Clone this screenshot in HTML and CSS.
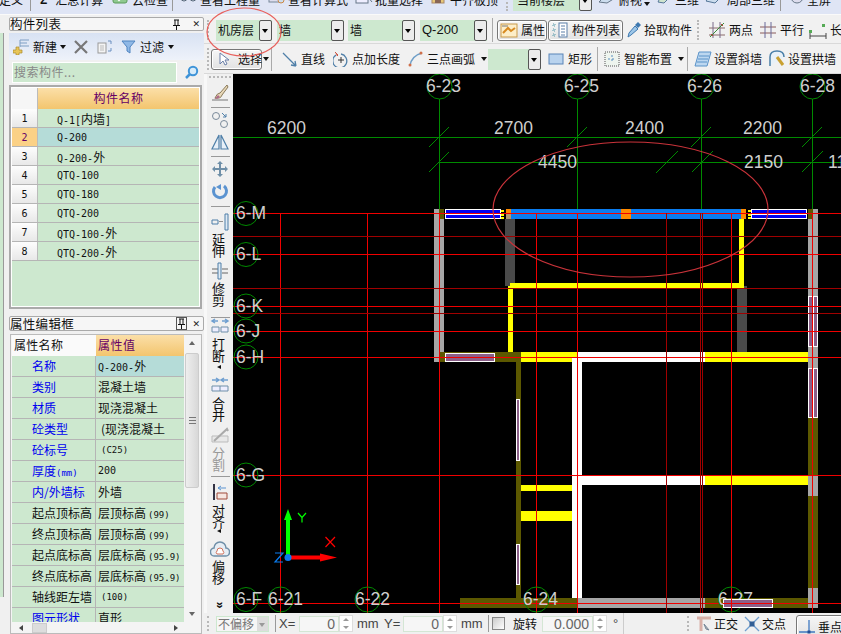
FILE: index.html
```html
<!DOCTYPE html>
<html lang="zh-CN">
<head>
<meta charset="utf-8">
<title>构件绘制</title>
<link rel="stylesheet" href="styles.css">
</head>
<body>
<div class="app">
  <header class="topbar">
    <span class="top-item ti-def">定义</span><i class="vsep"></i>
    <span class="top-item ti-sum"><b class="sigma">Σ</b>汇总计算</span>
    <span class="top-item ti-cloud"><svg width="16" height="14" viewBox="0 0 16 14"><rect x="1" y="0" width="14" height="9" rx="2" fill="#8fc98f" stroke="#5a9a5a"/><path d="M4 3l3 3 5-5" stroke="#fff" fill="none" stroke-width="2"/></svg>云检查</span><i class="vsep"></i>
    <span class="top-item ti-qty"><svg width="18" height="14" viewBox="0 0 18 14"><circle cx="4" cy="4" r="3" fill="none" stroke="#567"/><circle cx="13" cy="4" r="3" fill="none" stroke="#567"/><path d="M7 4h3" stroke="#567"/></svg>查看工程量</span>
    <span class="top-item ti-calc"><svg width="18" height="14" viewBox="0 0 18 14"><rect x="1" y="0" width="12" height="8" fill="#dde" stroke="#789"/><circle cx="13" cy="6" r="3" fill="#cde" stroke="#c84"/></svg>查看计算式</span>
    <span class="top-item ti-batch"><svg width="18" height="14" viewBox="0 0 18 14"><rect x="1" y="0" width="12" height="9" fill="#eef" stroke="#678"/><path d="M13 3l4 5" stroke="#678"/></svg>批量选择</span>
    <span class="top-item ti-flush"><svg width="16" height="14" viewBox="0 0 16 14"><rect x="2" y="0" width="12" height="9" fill="#e8c878" stroke="#a86"/><rect x="5" y="3" width="6" height="6" fill="#865"/></svg>平齐板顶</span>
    <i class="grip grip-top"></i>
    <span class="top-combo"><span class="top-combo-text">当前楼层</span><i class="arrow-btn"></i></span>
    <span class="top-item ti-view"><svg width="18" height="14" viewBox="0 0 18 14"><path d="M1 8l8-8 8 4-8 5z" fill="#cde" stroke="#678"/></svg>俯视<i class="caret"></i></span>
    <span class="top-item ti-3d"><svg width="18" height="14" viewBox="0 0 18 14"><path d="M3 8l4-8 8 3-6 6z" fill="#cfe4cf" stroke="#579"/></svg>三维</span>
    <span class="top-item ti-local"><svg width="18" height="14" viewBox="0 0 18 14"><path d="M1 7l6-7 9 3-6 6z" fill="#cde" stroke="#579"/></svg>局部三维</span><i class="vsep"></i>
    <span class="top-item ti-full"><svg width="18" height="14" viewBox="0 0 18 14"><circle cx="9" cy="3" r="6" fill="#dde" stroke="#678"/></svg>全屏</span>
  </header>

  <div class="main">
    <div class="edge-rail"><div class="edge-green"></div></div>

    <aside class="side">
      <div class="pane-title">
        <span class="pane-name">构件列表</span>
        <span class="pane-btns"><svg class="pin" width="9" height="11" viewBox="0 0 9 11"><path d="M2 1h5M3 1v5M6 1v5M1 6.500h7M4.500 7v4" stroke="#111" fill="none"/></svg><span class="close">✕</span></span>
      </div>
      <div class="list-bar">
        <span class="lb-new">
          <svg width="17" height="17" viewBox="0 0 17 17"><path d="M7 2h9M7 5h7M7 8h9" stroke="#7f9fc4" fill="none"/><path d="M7 2v7" stroke="#7f9fc4"/><path d="M3 9h3v3h3v3H6v2H3v-2H0v-3h3z" fill="#e8c65a" stroke="#a98a30" stroke-width=".7"/></svg>
          新建<i class="caret"></i>
        </span>
        <svg class="lb-del" width="14" height="14" viewBox="0 0 14 14"><path d="M1 1l12 12M13 1L1 13" stroke="#777" stroke-width="2.200"/></svg>
        <svg class="lb-copy" width="16" height="14" viewBox="0 0 16 14"><rect x="1" y="3" width="8" height="10" fill="#f4f4f4" stroke="#999"/><path d="M3 6h4M3 8h4M3 10h4" stroke="#bbb"/><path d="M11 1h3v3M14 8v3h-3" stroke="#6a8fc0" fill="none"/></svg>
        <span class="lb-filter">
          <svg width="15" height="14" viewBox="0 0 15 14"><path d="M1 1h13L9 7v6L6 11V7z" fill="#8fb8e6" stroke="#4f84c0"/></svg>
          过滤<i class="caret"></i>
        </span>
      </div>
      <div class="search-row">
        <span class="search-box">搜索构件...</span>
        <svg class="search-ico" width="15" height="15" viewBox="0 0 15 15"><circle cx="9" cy="6" r="4.200" fill="#d8ecfa" stroke="#3f94d8" stroke-width="2"/><path d="M6 9l-4 4" stroke="#3f94d8" stroke-width="2.500"/></svg>
      </div>
      <div class="list-grid">
        <div class="lg-row lg-head"><span class="lg-idx lg-corner"></span><span class="lg-name">构件名称</span></div>
        <div class="lg-row"><span class="lg-idx">1</span><span class="lg-val">Q-1[<span class="cjk">内墙</span>]</span></div>
        <div class="lg-row lg-sel"><span class="lg-idx">2</span><span class="lg-val">Q-200</span></div>
        <div class="lg-row"><span class="lg-idx">3</span><span class="lg-val">Q-200-<span class="cjk">外</span></span></div>
        <div class="lg-row"><span class="lg-idx">4</span><span class="lg-val">QTQ-100</span></div>
        <div class="lg-row"><span class="lg-idx">5</span><span class="lg-val">QTQ-180</span></div>
        <div class="lg-row"><span class="lg-idx">6</span><span class="lg-val">QTQ-200</span></div>
        <div class="lg-row"><span class="lg-idx">7</span><span class="lg-val">QTQ-100-<span class="cjk">外</span></span></div>
        <div class="lg-row"><span class="lg-idx">8</span><span class="lg-val">QTQ-200-<span class="cjk">外</span></span></div>
      </div>

      <div class="pane-title pane-title-2">
        <span class="pane-name">属性编辑框</span>
        <span class="pane-btns pane-btns-box"><svg class="pin" width="9" height="11" viewBox="0 0 9 11"><path d="M2 1h5M3 1v5M6 1v5M1 6.500h7M4.500 7v4" stroke="#111" fill="none"/></svg><span class="close">✕</span></span>
      </div>
      <div class="prop-grid">
        <div class="prop-table">
          <div class="pr pr-head"><span class="pk">属性名称</span><span class="pv">属性值</span></div>
          <div class="pr"><span class="pk blue">名称</span><span class="pv pv-sel mono">Q-200-<span class="cjk">外</span></span></div>
          <div class="pr"><span class="pk blue">类别</span><span class="pv">混凝土墙</span></div>
          <div class="pr"><span class="pk blue">材质</span><span class="pv">现浇混凝土</span></div>
          <div class="pr"><span class="pk blue">砼类型</span><span class="pv pv-in">(现浇混凝土</span></div>
          <div class="pr"><span class="pk blue">砼标号</span><span class="pv pv-in par">(C25)</span></div>
          <div class="pr"><span class="pk blue">厚度<span class="unit">(mm)</span></span><span class="pv mono">200</span></div>
          <div class="pr"><span class="pk blue">内/外墙标</span><span class="pv">外墙</span></div>
          <div class="pr"><span class="pk">起点顶标高</span><span class="pv">层顶标高<span class="par par-gap">(99)</span></span></div>
          <div class="pr"><span class="pk">终点顶标高</span><span class="pv">层顶标高<span class="par par-gap">(99)</span></span></div>
          <div class="pr"><span class="pk">起点底标高</span><span class="pv">层底标高<span class="par par-gap">(95.9)</span></span></div>
          <div class="pr"><span class="pk">终点底标高</span><span class="pv">层底标高<span class="par par-gap">(95.9)</span></span></div>
          <div class="pr"><span class="pk">轴线距左墙</span><span class="pv pv-in par">(100)</span></div>
          <div class="pr"><span class="pk blue">图元形状</span><span class="pv">直形</span></div>
        </div>
        <div class="vscroll"><i class="sb-up"></i><i class="sb-thumb"><i class="sb-lines"></i></i><i class="sb-down"></i></div>
        <div class="hscroll"><i class="hs-left"></i><i class="hs-thumb"></i><i class="hs-right"></i></div>
      </div>
    </aside>

    <section class="work">
      <div class="toolbar tb-one">
        <i class="grip"></i>
        <span class="combo c-floor"><span class="combo-text">机房层</span><i class="arrow-btn"></i></span>
        <span class="combo c-a"><span class="combo-text">墙</span><i class="arrow-btn"></i></span>
        <span class="combo c-b"><span class="combo-text">墙</span><i class="arrow-btn"></i></span>
        <span class="combo c-c"><span class="combo-text combo-latin">Q-200</span><i class="arrow-btn"></i></span>
        <i class="vsep tall s-one"></i>
        <span class="tool toggled t-attr"><svg width="18" height="16" viewBox="0 0 18 16"><rect x="1" y="2" width="16" height="13" fill="#fdeec8" stroke="#c99a4a"/><path d="M3 11l5-5 3 3 4-3" stroke="#d88a20" stroke-width="2" fill="none"/><path d="M2 4h6" stroke="#777"/></svg>属性</span>
        <span class="tool toggled t-list"><svg width="18" height="16" viewBox="0 0 18 16"><path d="M2 2h2v2H2zM2 7h2v2H2zM2 12h2v2H2z" fill="none" stroke="#59a" stroke-dasharray="1 1"/><rect x="8" y="1" width="8" height="14" fill="#fff" stroke="#5a7fa8"/><path d="M10 4h4M10 7h4M10 10h4M10 13h4" stroke="#5a7fa8"/></svg>构件列表</span>
        <span class="tool t-pick"><svg width="16" height="18" viewBox="0 0 16 18"><path d="M2 16l1-4 6-7 3 3-7 6z" fill="#9cc6e8" stroke="#3f79b0"/><path d="M9 4l3-3 3 3-3 3z" fill="#3f79b0"/></svg>拾取构件</span>
        <i class="grip grip-mid"></i>
        <span class="tool t-two"><svg width="18" height="18" viewBox="0 0 18 18"><path d="M1 14h16M1 7h16" stroke="#8a6a6a"/><path d="M5 1v16M12 1v16" stroke="#7a6a8a"/><path d="M2 16L16 2" stroke="#3a8a3a"/><path d="M3 13l2 2M13 3l2 2" stroke="#c33"/></svg>两点</span>
        <span class="tool t-par"><svg width="18" height="18" viewBox="0 0 18 18"><path d="M1 6h16M1 12h16" stroke="#8a5a5a"/><path d="M6 1v16M12 1v16" stroke="#6a6a9a"/></svg>平行</span>
        <span class="tool t-long"><svg width="18" height="18" viewBox="0 0 18 18"><path d="M1 15h16M1 12v6M17 12v6" stroke="#444"/><rect x="0" y="9" width="3" height="3" fill="#5a5"/><rect x="13" y="3" width="3" height="3" fill="#5a5"/></svg>长度</span>
      </div>

      <div class="toolbar tb-two">
        <i class="grip"></i>
        <span class="tool toggled t-select"><svg width="12" height="14" viewBox="0 0 12 14"><path d="M2 1v11l3-3 2 4 2-1-2-4h4z" fill="#fff" stroke="#6a7fa8"/></svg><span>选择</span></span><i class="caret caret-sel"></i>
        <i class="vsep tall s-two"></i>
        <span class="tool"><svg width="16" height="16" viewBox="0 0 16 16"><path d="M1 2l13 13M14 15l-1-5M14 15l-5-1" stroke="#4f7fa8" fill="none" stroke-width="1.300"/></svg>直线</span>
        <span class="tool"><svg width="16" height="16" viewBox="0 0 16 16"><path d="M3 4a7 7 0 1 0 5-1" stroke="#4f7fa8" fill="none" stroke-width="1.300"/><path d="M8 6v6M5 9h6" stroke="#333"/><path d="M2 1l3 3-1 1" fill="#c54" stroke="#c54"/></svg>点加长度</span>
        <span class="tool"><svg width="16" height="16" viewBox="0 0 16 16"><path d="M2 15Q3 5 14 2" stroke="#6f9fc8" fill="none" stroke-width="1.500"/><circle cx="2" cy="14" r="1.500" fill="#d0704a"/><circle cx="13" cy="2" r="1.500" fill="#d0704a"/></svg>三点画弧<i class="caret caret-gap"></i></span>
        <span class="combo c-blank"><span class="combo-text"></span><i class="arrow-btn"></i></span>
        <span class="tool t-rect"><svg width="16" height="14" viewBox="0 0 16 14"><rect x="1" y="2" width="14" height="10" fill="#b9d3ee" stroke="#5b85b8"/></svg>矩形</span>
        <i class="vsep tall s-rect"></i>
        <span class="tool t-smart"><svg width="16" height="16" viewBox="0 0 16 16"><rect x="1" y="1" width="14" height="14" fill="#eef4ee" stroke="#555" stroke-dasharray="1 1"/><path d="M8 4v8M4 8h8" stroke="#5a8fc0" stroke-dasharray="2 2"/></svg>智能布置<i class="caret"></i></span>
        <i class="vsep tall s-smart"></i>
        <span class="tool t-slant"><svg width="18" height="16" viewBox="0 0 18 16"><path d="M5 1h12l-4 14H1z" fill="#bcd7f0" stroke="#5b93c8"/><path d="M5 5h10M4 8h10M3 11h10" stroke="#5b93c8"/></svg>设置斜墙</span>
        <span class="tool t-arch"><svg width="18" height="18" viewBox="0 0 18 18"><path d="M2 16V7Q2 1 9 1t7 6" fill="#e8f1f8" stroke="#4a7fa8" stroke-width="1.500"/><path d="M9 7l6 8" stroke="#c9a030" stroke-width="3"/></svg>设置拱墙</span>
      </div>

      <div class="mid">
        <nav class="tools">
          <i class="grip-h"></i>
          <svg class="ti mt4" width="20" height="18" viewBox="0 0 20 18"><path d="M2 16h16" stroke="#777"/><path d="M5 14q2-5 5-5l7-8 1 2-6 8q-1 4-7 3z" fill="#e8d8b8" stroke="#8a7a5a"/><path d="M4 15q2-1 4-4l2 2q-2 2-6 2z" fill="#b06a8a"/></svg>
          <i class="tsep mt5"></i>
          <svg class="ti mt3" width="20" height="18" viewBox="0 0 20 18"><circle cx="6" cy="5" r="3.500" fill="none" stroke="#7a8a9a"/><circle cx="14" cy="13" r="3.500" fill="none" stroke="#7a8a9a"/><path d="M12 2l4 4M16 3v3h-3" stroke="#4f7fa8" fill="none"/></svg>
          <svg class="ti mt4" width="20" height="18" viewBox="0 0 20 18"><path d="M9 2v14H2zM11 2v14h7z" fill="#e8f0f8" stroke="#4f7fa8" stroke-width="1.200"/></svg>
          <i class="tsep mt5"></i>
          <svg class="ti mt3" width="20" height="18" viewBox="0 0 20 18"><path d="M10 1l3 3h-2v4h4V6l3 3-3 3v-2h-4v4h2l-3 3-3-3h2v-4H5v2L2 9l3-3v2h4V4H7z" fill="#6f8fa8"/></svg>
          <svg class="ti mt5" width="20" height="18" viewBox="0 0 20 18"><path d="M5 4a6.500 6.500 0 1 0 9-1" stroke="#5b93d0" fill="none" stroke-width="3"/><path d="M11 1v6l-5-3z" fill="#5b93d0"/></svg>
          <i class="tsep mt5"></i>
          <svg class="ti mt6" width="20" height="18" viewBox="0 0 20 18"><path d="M2 7h6v4H2z" fill="none" stroke="#4f7fa8"/><path d="M10 8v1M12 8v1" stroke="#333"/><path d="M15 1h3v16h-3z" fill="#dfeaf4" stroke="#4f7fa8"/></svg>
          <span class="tv mt2">延<br>伸</span>
          <svg class="ti mt5" width="20" height="18" viewBox="0 0 20 18"><path d="M2 7h6M2 11h6M12 7h6M12 11h6" stroke="#666"/><path d="M8 1h3v16H8z" fill="#dfeaf4" stroke="#4f7fa8"/></svg>
          <span class="tv mt2">修<br>剪</span>
          <i class="tsep mt11"></i>
          <svg class="ti" width="20" height="18" viewBox="0 0 20 18"><path d="M2 3h6M12 3h6M5 1L2 3l3 2M15 1l3 2-3 2" stroke="#6f9fd0" fill="none" stroke-width="1.500"/><path d="M2 9h7v5H2zM11 9h7v5h-7z" fill="#eef" stroke="#6f8fa8"/></svg>
          <span class="tv mt2">打<br>断</span>
          <i class="tri-left mt3"></i>
          <svg class="ti mt8" width="20" height="18" viewBox="0 0 20 18"><path d="M2 3h6M12 3h6M6 1l3 2-3 2M14 1l-3 2 3 2" stroke="#6f9fd0" fill="none" stroke-width="1.500"/><path d="M2 9h16v5H2zM10 9v5" fill="#eef" stroke="#6f8fa8"/></svg>
          <span class="tv mt2">合<br>并</span>
          <svg class="ti mt6" width="20" height="18" viewBox="0 0 20 18"><path d="M2 9h16v6H2z" fill="#e8e8e8" stroke="#bbb"/><path d="M4 14L17 2l1 2" stroke="#aaa" fill="none" stroke-width="2"/></svg>
          <span class="tv tv-off mt2">分<br>割</span>
          <i class="tsep mt5"></i>
          <svg class="ti mt6" width="20" height="18" viewBox="0 0 20 18"><path d="M3 1h2v16H3z" fill="#334"/><path d="M16 5H8M11 3L8 5l3 2" stroke="#5b93d0" fill="none"/><path d="M7 10h10v6H7z" fill="#f6e6e0" stroke="#a04a3a"/></svg>
          <span class="tv mt3">对<br>齐</span>
          <i class="tri-left mt1"></i>
          <svg class="ti mt8" width="20" height="18" viewBox="0 0 20 18"><path d="M5 15a4 4 0 0 1-1-8 6 6 0 0 1 12 0 4 4 0 0 1-1 8z" fill="#e6edf4" stroke="#6f8fa8" stroke-width="1.500"/><path d="M7 13a2 2 0 0 1 0-3 3 3 0 0 1 6 0 2 2 0 0 1 0 3z" fill="#fff" stroke="#d0705a"/></svg>
          <span class="tv mt1">偏<br>移</span>
          <span class="more">»</span>
        </nav>

        <div class="canvas">
          <svg class="drawing" width="608" height="539" viewBox="233 74 608 539" xmlns="http://www.w3.org/2000/svg">
            <!-- dimension and axis lines -->
            <path class="gline" d="M233 137.500H841M439 162.500H841M439.500 99V209M577.500 99V213M701.500 99V213M812.500 99V209"/>
            <path class="gtick" d="M429 147l20-20M567 147l20-20M691 147l20-20M802 147l20-20M429 172l20-20M656 173l22-22M692 172l21-21M802 172l21-21"/>

            <!-- walls -->
            <rect class="w-gray" x="434" y="209" width="10" height="153"/>
            <rect class="w-olive" x="439" y="209" width="5" height="10"/>
            <rect class="w-gray" x="808" y="209" width="10" height="399"/>
            <rect class="w-olive" x="808" y="209" width="5" height="10"/>
            <rect class="w-olive" x="808" y="418" width="10" height="58"/>
            <rect class="w-olive" x="808" y="496" width="10" height="92"/>
            <rect class="w-dark" x="505" y="219" width="10" height="67"/>
            <rect class="w-dark" x="737" y="286" width="10" height="66"/>
            <rect class="w-yellow" x="510" y="283" width="234" height="5"/>
            <rect class="w-yellow" x="739" y="219" width="5" height="69"/>
            <rect class="w-yellow" x="508" y="286" width="5" height="66"/>
            <rect class="w-blue" x="511" y="209" width="230" height="10"/>
            <rect class="w-orange" x="506" y="209" width="5" height="10"/>
            <rect class="w-tan" x="506" y="214" width="5" height="5"/>
            <rect class="w-orange" x="621" y="209" width="10" height="10"/>
            <rect class="w-orange" x="741" y="209" width="5" height="10"/>
            <path class="w-bits" d="M501 210h3v2h-3zM501 214h3v2h-3zM501 217h3v2h-3zM748 210h3v2h-3zM748 214h3v2h-3zM748 217h3v2h-3z"/>
            <rect class="w-olive" x="439" y="352" width="82" height="10"/>
            <rect class="w-olive" x="516" y="362" width="5" height="236"/>
            <rect class="w-yellow" x="521" y="352" width="56" height="5"/>
            <rect class="w-yellow" x="521" y="357" width="51" height="5"/>
            <rect class="w-white" x="577" y="352" width="128" height="10"/>
            <rect class="w-white" x="572" y="357" width="10" height="241"/>
            <rect class="w-yellow" x="705" y="352" width="103" height="10"/>
            <rect class="w-white" x="582" y="475" width="123" height="10"/>
            <rect class="w-yellow" x="705" y="475" width="103" height="10"/>
            <rect class="w-yellow" x="521" y="485" width="51" height="6"/>
            <rect class="w-yellow" x="521" y="511" width="51" height="10"/>
            <rect class="w-olive" x="460" y="598" width="117" height="10"/>
            <rect class="w-gray" x="577" y="598" width="123" height="10"/>
            <rect class="w-olive" x="705" y="598" width="103" height="10"/>
            <rect class="w-gray" x="700" y="598" width="5" height="10"/>

            <!-- blue windows on the top wall -->
            <rect class="win-blue" x="445.500" y="209.500" width="55" height="9"/>
            <path class="win-mid" d="M445 214.500h56"/>
            <rect class="win-blue" x="751.500" y="209.500" width="55" height="9"/>
            <path class="win-mid" d="M751 214.500h56"/>

            <!-- pink windows -->
            <rect class="win-pink" x="445.500" y="353.500" width="49" height="8"/>
            <path class="win-mid" d="M445 357.500h50"/>
            <rect class="win-pink" x="808.500" y="296.500" width="9" height="50"/>
            <path class="win-mid" d="M813.500 296v51"/>
            <rect class="win-pink" x="808.500" y="368.500" width="9" height="49"/>
            <path class="win-mid" d="M813.500 368v50"/>
            <rect class="win-pink" x="516.500" y="399.500" width="3" height="61"/>
            <rect class="win-pink" x="516.500" y="544.500" width="3" height="40"/>

            <!-- red construction lines -->
            <path class="rline" d="M233 213.500H841M233 254.500H841M233 306.500H841M233 331.500H841M233 357.500H841M233 475.500H841M233 603.500H841M280.500 213V613M367.500 213V613M439.500 213V613M536.500 213V613M577.500 213V613M731.500 213V613M812.500 213V613"/>
            <path class="rdark" d="M233 236.500H841M233 288.500H841M233 313.500H841M666.500 213V613M700.500 213V613M702.500 213V613"/>

            <!-- axis bubbles -->
            <g class="bubbles">
              <circle cx="439.500" cy="86.500" r="12.500"/><circle cx="577.500" cy="86.500" r="12.500"/><circle cx="701.500" cy="86.500" r="12.500"/><circle cx="812.500" cy="86.500" r="12.500"/>
              <circle cx="246" cy="213.500" r="12"/><circle cx="246" cy="254.500" r="12"/><circle cx="246" cy="306" r="12"/><circle cx="246" cy="331" r="12"/><circle cx="246" cy="357" r="12"/><circle cx="246" cy="475" r="12"/>
              <circle cx="246" cy="599.500" r="12"/><circle cx="280.500" cy="599.500" r="12.500"/><circle cx="367.500" cy="599.500" r="12.500"/><circle cx="536.500" cy="599.500" r="12.500"/><circle cx="731" cy="599.500" r="12.500"/>
            </g>
            <g class="labels">
              <text x="426" y="92">6-23</text><text x="564" y="92">6-25</text><text x="687" y="92">6-26</text><text x="800" y="92">6-28</text>
              <text x="267" y="134">6200</text><text x="494" y="134">2700</text><text x="625" y="134">2400</text><text x="743" y="134">2200</text>
              <text x="538" y="168">4450</text><text x="744" y="168">2150</text><text x="828" y="168">11</text>
              <text x="236" y="219">6-M</text><text x="236" y="260">6-L</text><text x="236" y="312">6-K</text><text x="236" y="337">6-J</text><text x="236" y="363">6-H</text><text x="236" y="481">6-G</text>
              <text x="236" y="605">6-F</text><text x="268" y="605">6-21</text><text x="355" y="605">6-22</text><text x="523" y="605">6-24</text><text x="718" y="605">6-27</text>
            </g>
            <rect class="win-pink" x="723.500" y="599.500" width="49" height="8"/>
            <path class="win-mid" d="M723 603.500h50"/>
            <path class="rline" d="M723 603.500h50M731.500 599V608"/>

            <!-- coordinate marker -->
            <path class="ucs-y" d="M286 520h4v37h-4zM288 509l4 11h-8z"/>
            <path class="ucs-x" d="M288 555.500h34v4h-34zM337 557.500l-17 4v-8z"/>
            <path class="ucs-y-l" d="M298 513l4 4.500 4-4.500M302 517.500v5"/>
            <path class="ucs-x-l" d="M325.500 537l9.500 10M335 537l-9.500 10"/>
            <path class="ucs-z-l" d="M275 553h8l-8 9h8"/>
            <circle class="ucs-o" cx="288" cy="557.500" r="3.500"/>
          </svg>
        </div>
      </div>

      <footer class="status">
        <i class="grip"></i>
        <span class="st-combo"><span>不偏移</span><i class="st-drop"></i></span>
        <i class="vsep st-sep"></i>
        <span class="st-label st-x">X=</span>
        <span class="st-input st-num">0</span><i class="spin"></i>
        <span class="st-label st-mm">mm</span>
        <span class="st-label st-y">Y=</span>
        <span class="st-input st-num">0</span><i class="spin"></i>
        <span class="st-label st-mm">mm</span>
        <i class="vsep st-sep2"></i>
        <i class="check"></i>
        <span class="st-text st-rot">旋转</span>
        <span class="st-input st-angle">0.000</span><i class="spin"></i>
        <span class="st-label st-deg">°</span>
        <i class="vsep st-sep3"></i>
        <i class="grip st-grip"></i>
        <span class="tool st-tool"><svg width="16" height="16" viewBox="0 0 16 16"><path d="M1 2h14M5 2v13" stroke="#d8b0a8" stroke-width="3"/><path d="M8 8l5 6-3-1z" fill="#bbb" stroke="#789"/></svg>正交</span>
        <span class="tool st-tool st-cross"><svg width="16" height="16" viewBox="0 0 16 16"><path d="M1 1l14 14M15 1L1 15" stroke="#6f9fd0" stroke-width="1.300"/><rect x="5.500" y="5.500" width="5" height="5" fill="#335f95"/></svg>交点</span>
        <span class="tool toggled st-perp"><svg width="16" height="16" viewBox="0 0 16 16"><path d="M0 13h16M10 1v12" stroke="#3f79c0" stroke-width="1.300"/><rect x="8.500" y="11.500" width="3" height="3" fill="#234f95"/></svg>垂点</span>
      </footer>
    </section>

    <svg class="annot" width="841" height="634" viewBox="0 0 841 634" xmlns="http://www.w3.org/2000/svg">
      <ellipse class="annot-a" cx="244" cy="32" rx="37" ry="24"/>
      <ellipse class="annot-b" cx="630.500" cy="209.500" rx="137.500" ry="67.500"/>
    </svg>
  </div>
</div>
</body>
</html>
```

FILE: styles.css
```css
* { box-sizing: border-box; }
html, body { margin: 0; padding: 0; }
body {
  width: 841px;
  height: 634px;
  overflow: hidden;
  background: #f0f0f0;
  font-family: "Noto Sans CJK SC", "Liberation Sans", sans-serif;
  font-size: 12px;
  line-height: 12px;
  color: #111;
}
i { display: block; font-style: normal; }
svg { display: block; flex: none; }

.app { display: flex; flex-direction: column; width: 841px; height: 634px; overflow: hidden; position: relative; }

.grip { width: 2px; flex: none; align-self: stretch; border-left: 2px dotted #b8b8b8; margin: 3px 0; }
.caret { width: 0; height: 0; border: 3px solid transparent; border-top: 4px solid #111; border-bottom: 0; flex: none; }
.vsep { width: 1px; background: #999; flex: none; }

/* top bar, clipped by the window edge */
.topbar {
  height: 15px;
  flex: none;
  display: flex;
  align-items: flex-end;
  overflow: hidden;
  background: #dfe5f5;
  border-bottom: 1px solid #fafafa;
  padding-bottom: 8px;
}
.top-item { display: flex; align-items: flex-end; gap: 4px; flex: none; }
.top-item svg { margin-bottom: -2px; }
.sigma { font-weight: 700; font-family: "Liberation Sans", sans-serif; margin-right: 4px; }
.topbar .vsep { height: 24px; margin-bottom: -5px; }
.ti-def { margin-left: -1px; width: 31px; }
.ti-sum { margin-left: 9px; width: 66px; }
.ti-cloud { margin-left: 6px; width: 60px; }
.ti-qty { margin-left: 7px; width: 82px; gap: 2px; }
.ti-calc { margin-left: 6px; width: 82px; gap: 2px; }
.ti-batch { margin-left: 5px; width: 70px; gap: 2px; }
.ti-flush { margin-left: 5px; width: 72px; gap: 4px; }
.topbar .grip-top { height: 24px; margin: 0 5px -5px 4px; align-self: flex-end; }
.top-combo { width: 79px; height: 24px; margin-bottom: -5px; background: #cde8cf; display: flex; justify-content: space-between; align-items: flex-end; flex: none; padding-left: 4px; }
.top-combo-text { padding-bottom: 5px; }
.ti-view { margin-left: 6px; width: 57px; gap: 2px; }
.ti-3d { width: 50px; gap: 2px; }
.ti-local { width: 75px; gap: 4px; }
.ti-full { margin-left: 7px; gap: 1px; }

/* main layout */
.main { flex: 1; display: flex; min-height: 0; position: relative; }
.edge-rail { width: 9px; flex: none; background: #f0f0f0; padding-top: 18px; }
.edge-green { width: 3px; height: 564px; background: #cde8cf; box-shadow: 1px 0 0 #999; }

.side { width: 195px; flex: none; display: flex; flex-direction: column; background: #f0f0f0; }
.pane-title {
  margin-top: 2px;
  height: 14px;
  flex: none;
  display: flex;
  align-items: center;
  justify-content: space-between;
  border: 1px solid #aaa;
  border-radius: 2px;
  background: #f6f6f6;
}
.pane-name { font-size: 12.500px; letter-spacing: .3px; }
.pane-btns { display: flex; align-items: center; gap: 11px; padding-right: 3px; }
.pane-btns-box .pin { outline: 1px solid #555; }
.close { font-size: 9px; color: #222; font-family: "DejaVu Sans", sans-serif; }

.list-bar {
  margin-top: 2px;
  height: 27px;
  flex: none;
  display: flex;
  align-items: center;
  background: linear-gradient(#d8e2f3, #eef2fa);
  padding-left: 4px;
}
.lb-new { display: flex; align-items: center; gap: 3px; width: 61px; }
.lb-del { margin-right: 9px; }
.lb-copy { margin-right: 8px; }
.lb-filter { display: flex; align-items: center; gap: 4px; }

.search-row { height: 25px; flex: none; display: flex; align-items: center; padding-left: 3px; }
.search-box { width: 165px; height: 21px; background: #cde8cf; border: 1px solid #fff; color: #888; line-height: 17px; padding-left: 1px; font-size: 12px; letter-spacing: .5px; }
.search-ico { margin-left: 7px; }

.list-grid {
  height: 224px;
  flex: none;
  margin-right: 2px;
  border: 2px solid #aaa;
  background: #cde8cf;
  box-shadow: inset 0 0 0 1px #fff;
  padding: 1px;
}
.lg-row { display: flex; height: 19px; border-bottom: 1px solid #b5b5b5; }
.lg-head { height: 21px; border-bottom: 0; }
.lg-idx { width: 26px; flex: none; background: linear-gradient(#fdfdfd, #e8e8e8); border-right: 1px solid #bbb; text-align: center; line-height: 19px; font-family: "DejaVu Sans Mono", monospace; font-size: 10px; }
.lg-corner { background: #f6f6f6; }
.lg-name { flex: 1; background: linear-gradient(#fbdfa8, #f3c56e); color: #660066; text-align: center; line-height: 20px; letter-spacing: .5px; }
.lg-val { flex: 1; padding-left: 19px; line-height: 19px; font-family: "DejaVu Sans Mono", "Noto Sans CJK SC", monospace; font-size: 10px; }
.cjk { font-family: "Noto Sans CJK SC", sans-serif; font-size: 12px; }
.lg-sel .lg-idx { background: #fbd186; color: #660066; }
.lg-sel .lg-val { background: #b5dcd8; }

.pane-title-2 { margin-top: 7px; height: 15px; }
.pane-btns-box { gap: 6px; }

.prop-grid {
  flex: 1;
  min-height: 0;
  margin: 3px 2px 0 1px;
  border: 1px solid #bbb;
  background: #f4f4f4;
  padding: 0 0 0 1px;
  display: grid;
  grid-template-columns: 172px 16px;
  grid-template-rows: 1fr 11px;
  overflow: hidden;
}
.prop-table { overflow: hidden; background: #cde8cf; }
.pr { display: flex; height: 21px; border-bottom: 1px solid #b5b5b5; line-height: 20px; }
.pr-head { border-bottom: 0; }
.pk { width: 84px; flex: none; padding-left: 20px; border-right: 1px solid #b5b5b5; white-space: nowrap; overflow: hidden; }
.pv { flex: 1; padding-left: 2px; white-space: nowrap; overflow: hidden; }
.pr-head .pk { background: #fafafa; padding-left: 2px; border-right: 0; letter-spacing: .3px; }
.pr-head .pv { background: linear-gradient(#fbdfa8, #f3c56e); color: #660066; letter-spacing: .5px; }
.blue { color: #0000f0; }
.pv-sel { background: #b5dcd8; }
.pv-in { padding-left: 5px; }
.mono { font-family: "DejaVu Sans Mono", monospace; font-size: 10px; }
.par { font-family: "DejaVu Sans Mono", monospace; font-size: 9px; }
.par-gap { margin-left: 2px; }
.unit { font-family: "DejaVu Sans Mono", monospace; font-size: 9px; }

.vscroll { display: flex; flex-direction: column; align-items: center; background: #f4f4f4; }
.sb-up { width: 0; height: 0; border: 3px solid transparent; border-bottom: 4px solid #666; border-top: 0; margin: 6px 0 8px; flex: none; }
.sb-thumb { width: 14px; height: 135px; flex: none; background: linear-gradient(90deg, #eee, #d8d8d8); border: 1px solid #ccc; border-radius: 2px; display: flex; align-items: center; justify-content: center; }
.sb-lines { width: 7px; height: 7px; border-top: 1px solid #777; border-bottom: 1px solid #777; background: linear-gradient(#777, #777) center / 100% 1px no-repeat; }
.sb-down { width: 0; height: 0; border: 3px solid transparent; border-top: 4px solid #666; border-bottom: 0; margin-top: 124px; flex: none; }
.hscroll { grid-column: 1 / 3; display: flex; align-items: center; background: #f4f4f4; padding-left: 7px; }
.hs-left { width: 0; height: 0; border: 3px solid transparent; border-right: 4px solid #444; border-left: 0; }
.hs-thumb { width: 15px; height: 10px; margin-left: 9px; background: #ddd; border: 1px solid #ccc; }
.hs-right { width: 0; height: 0; border: 3px solid transparent; border-left: 4px solid #444; border-right: 0; margin-left: 127px; }

/* right work area */
.work { flex: 1; min-width: 0; display: flex; flex-direction: column; }
.toolbar { height: 29px; flex: none; display: flex; align-items: center; background: #f1f1f1; border-bottom: 1px solid #d9d9d9; padding-left: 3px; overflow: hidden; }
.tb-one { padding-top: 2px; height: 29px; }
.tb-two { padding-top: 1px; height: 30px; }
.tb-two > .tool { margin-right: 8px; }
.combo { display: flex; align-items: center; justify-content: space-between; height: 21px; background: #cde8cf; flex: none; }
.combo-text { padding-left: 2px; font-size: 12px; }
.combo-latin { font-family: "Liberation Sans", sans-serif; font-size: 13px; }
.arrow-btn { width: 13px; height: 21px; flex: none; background: #ececec; border: 1px solid #555; border-radius: 2px; position: relative; }
.arrow-btn::after { content: ""; position: absolute; left: 2px; top: 8px; border: 3.500px solid transparent; border-top: 4px solid #000; border-bottom: 0; }
.c-floor { width: 56px; margin-left: 7px; }
.c-a { width: 67px; margin-left: 5px; }
.c-b { width: 67px; margin-left: 4px; }
.c-c { width: 67px; margin-left: 5px; }
.tall { height: 24px; background: #aaa; }
.s-one { margin: 0 4px 0 5px; }
.tool { display: inline-flex; align-items: center; gap: 3px; flex: none; white-space: nowrap; }
.toggled { height: 21px; border: 1px solid #777; border-radius: 3px; background: linear-gradient(#f6f6f6, #e2e2e2); box-shadow: inset 0 0 0 1px #fff; padding: 0 2px; }
.t-attr { width: 50px; }
.t-list { width: 75px; margin-left: 1px; }
.t-pick { margin-left: 3px; gap: 2px; }
.grip-mid { margin: 3px 7px 3px 5px; }
.t-two { width: 46px; margin-left: 2px; }
.t-par { width: 46px; margin-left: 5px; }
.t-long { margin-left: 4px; }

.t-select { width: 51px; margin-left: 2px; gap: 8px; padding-left: 6px; }
.tb-two > .t-select { margin-right: 0; }
.caret-sel { margin: 0 1px; }
.s-two { margin: 0 10px 0 1px; }
.caret-gap { margin-left: 3px; }
.c-blank { width: 53px; margin-right: 7px; margin-left: -7px; }
.tb-two > .t-rect { margin-right: 5px; }
.t-rect { gap: 4px; }
.s-rect { margin-right: 6px; }
.t-smart { gap: 4px; }
.tb-two > .t-smart { margin-right: 3px; }
.t-smart .caret { margin-left: 2px; }
.s-smart { margin-right: 6px; }
.tb-two > .t-slant { margin-right: 6px; }
.t-slant { gap: 2px; }
.t-arch { gap: 2px; }

.mid { flex: 1; min-height: 0; display: flex; }
.tools { width: 29px; flex: none; display: flex; flex-direction: column; align-items: center; background: #f0f0f0; border-left: 3px solid #f8f8f8; }
.grip-h { width: 22px; height: 2px; margin-top: 2px; margin-bottom: 2px; border-top: 2px dotted #b8b8b8; }
.ti { flex: none; }
.tsep { width: 19px; height: 1px; background: #999; flex: none; }
.tv { display: block; text-align: center; line-height: 12px; font-size: 13px; flex: none; margin-left: -3px; }
.tv-off { color: #999; }
.tri-left { width: 0; height: 0; border: 2px solid transparent; border-right: 4px solid #111; border-left: 0; flex: none; margin-left: -3px; }
.more { margin-top: 15px; font-size: 12px; line-height: 12px; font-weight: 700; transform: rotate(90deg); font-family: "Liberation Sans", sans-serif; }
.mt1 { margin-top: 1px; } .mt2 { margin-top: 2px; } .mt3 { margin-top: 3px; } .mt4 { margin-top: 4px; }
.mt5 { margin-top: 5px; } .mt6 { margin-top: 6px; } .mt8 { margin-top: 8px; } .mt11 { margin-top: 11px; }

.canvas { flex: 1; min-width: 0; background: #000; overflow: hidden; }
.drawing { shape-rendering: crispEdges; }
.gline { stroke: #008a00; fill: none; }
.gtick { stroke: #008a00; fill: none; shape-rendering: auto; }
.w-gray { fill: #a6a6a6; }
.w-olive { fill: #5c5800; }
.w-dark { fill: #4a4a4a; }
.w-yellow { fill: #ffff00; }
.w-blue { fill: #0a7cf0; }
.w-orange { fill: #ff8a00; }
.w-tan { fill: #b09a70; }
.w-white { fill: #fff; }
.w-bits { fill: #ffff00; }
.win-blue { fill: #0000f0; stroke: #fff; }
.win-pink { fill: #8a5f88; stroke: #fff; }
.win-mid { stroke: #fff; fill: none; }
.bubbles circle { fill: none; stroke: #008a00; shape-rendering: auto; }
.labels text { fill: #cfcfcf; font-family: "Liberation Sans", sans-serif; font-size: 17.500px; shape-rendering: auto; }
.rline { stroke: #f00000; fill: none; }
.rdark { stroke: #a00000; fill: none; }
.ucs-y { fill: #00ff00; shape-rendering: auto; }
.ucs-x { fill: #ff0000; shape-rendering: auto; }
.ucs-y-l { stroke: #00ff00; stroke-width: 1.200; fill: none; shape-rendering: auto; }
.ucs-x-l { stroke: #ff0000; stroke-width: 1.200; fill: none; shape-rendering: auto; }
.ucs-z-l { stroke: #0a7cf0; stroke-width: 1.200; fill: none; shape-rendering: auto; }
.ucs-o { fill: #0a7cf0; shape-rendering: auto; }

/* status bar */
.status { height: 21px; flex: none; display: flex; align-items: center; background: #f0f0f0; padding-left: 3px; color: #444; overflow: hidden; }
.st-combo { width: 53px; height: 16px; margin-left: 7px; display: flex; justify-content: space-between; border: 1px solid #cde8cf; color: #777; font-size: 12px; line-height: 14px; padding-left: 1px; background: #f6f6f6; flex: none; }
.st-drop { width: 11px; background: #ddd; position: relative; }
.st-drop::after { content: ""; position: absolute; left: 2px; top: 6px; border: 3px solid transparent; border-top: 4px solid #999; border-bottom: 0; }
.st-sep { height: 17px; margin: 0 3px 0 6px; }
.st-label { font-family: "Liberation Sans", sans-serif; font-size: 13px; flex: none; }
.st-x { width: 20px; }
.st-input { height: 16px; border: 1px solid #d4e6d4; background: #f6f6f6; text-align: right; font-family: "Liberation Sans", sans-serif; font-size: 14px; line-height: 14px; color: #666; padding-right: 3px; flex: none; }
.st-num { width: 40px; }
.spin { width: 14px; height: 17px; background: #fff; flex: none; position: relative; border: 1px solid #ddd; }
.spin::before { content: ""; position: absolute; left: 3px; top: 2px; border: 3px solid transparent; border-bottom: 3px solid #999; border-top: 0; }
.spin::after { content: ""; position: absolute; left: 3px; bottom: 2px; border: 3px solid transparent; border-top: 3px solid #999; border-bottom: 0; }
.st-mm { width: 27px; margin-left: 4px; }
.st-y { width: 19px; }
.st-sep2 { height: 17px; margin-left: 0; margin-right: 3px; }
.check { width: 13px; height: 13px; border: 1px solid #888; background: linear-gradient(135deg, #ccc, #fff); flex: none; }
.st-rot { margin-left: 8px; width: 29px; flex: none; color: #111; }
.st-angle { width: 51px; }
.st-deg { margin-left: 6px; width: 10px; }
.st-sep3 { height: 21px; background: #ccc; }
.st-grip { margin-left: 63px; margin-right: 7px; }
.st-tool { gap: 2px; color: #111; width: 42px; }
.st-cross { margin-left: 6px; width: 45px; }
.st-perp { margin-left: 7px; width: 60px; height: 24px; margin-top: 6px; color: #111; padding-left: 2px; }

.annot { position: absolute; left: 0; top: -15px; pointer-events: none; }
.annot-a { fill: none; stroke: #e8605c; stroke-width: 1.200; }
.annot-b { fill: none; stroke: #c9333a; stroke-width: 1.200; }
```
